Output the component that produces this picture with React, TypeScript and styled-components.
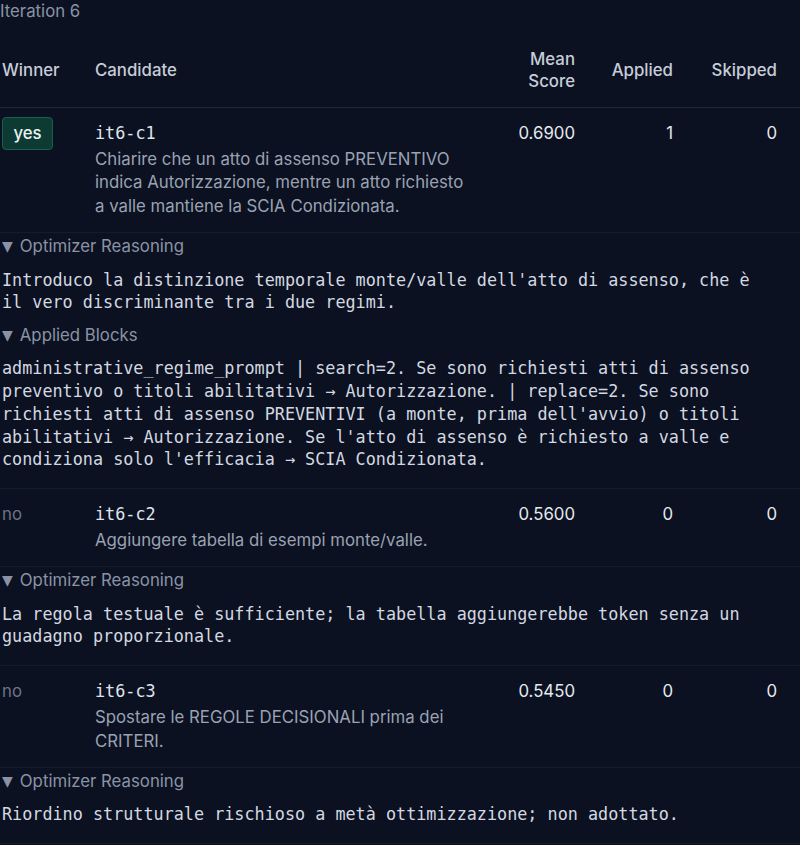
import styled, { createGlobalStyle } from 'styled-components'

interface ICandidate {
  id: string
  winner: boolean
  description: string
  score: string
  applied: number
  skipped: number
  reasoning: string
  appliedBlocks?: string
}

const candidates: ICandidate[] = [
  {
    id: 'it6-c1',
    winner: true,
    description:
      'Chiarire che un atto di assenso PREVENTIVO indica Autorizzazione, mentre un atto richiesto a valle mantiene la SCIA Condizionata.',
    score: '0.6900',
    applied: 1,
    skipped: 0,
    reasoning:
      "Introduco la distinzione temporale monte/valle dell'atto di assenso, che è il vero discriminante tra i due regimi.",
    appliedBlocks:
      "administrative_regime_prompt | search=2. Se sono richiesti atti di assenso preventivo o titoli abilitativi → Autorizzazione. | replace=2. Se sono richiesti atti di assenso PREVENTIVI (a monte, prima dell'avvio) o titoli abilitativi → Autorizzazione. Se l'atto di assenso è richiesto a valle e condiziona solo l'efficacia → SCIA Condizionata.",
  },
  {
    id: 'it6-c2',
    winner: false,
    description: 'Aggiungere tabella di esempi monte/valle.',
    score: '0.5600',
    applied: 0,
    skipped: 0,
    reasoning:
      'La regola testuale è sufficiente; la tabella aggiungerebbe token senza un guadagno proporzionale.',
  },
  {
    id: 'it6-c3',
    winner: false,
    description: 'Spostare le REGOLE DECISIONALI prima dei CRITERI.',
    score: '0.5450',
    applied: 0,
    skipped: 0,
    reasoning: 'Riordino strutturale rischioso a metà ottimizzazione; non adottato.',
  },
]

function Section({ title, text }: { title: string; text: string }) {
  return (
    <Details open>
      <Summary>
        <span className="arrow">▼</span>
        {title}
      </Summary>
      <Pre>{text}</Pre>
    </Details>
  )
}

export default function App() {
  return (
    <Page>
      <GlobalStyle />
      <Title>Iteration 6</Title>
      <HeaderRow>
        <HeadCell>Winner</HeadCell>
        <HeadCell>Candidate</HeadCell>
        <HeadCell $numeric>
          Mean
          <br />
          Score
        </HeadCell>
        <HeadCell $numeric>Applied</HeadCell>
        <HeadCell $numeric>Skipped</HeadCell>
      </HeaderRow>
      {candidates.map((c) => (
        <div key={c.id}>
          <Row>
            <WinnerCell>
              {c.winner ? <Badge>yes</Badge> : <NoLabel>no</NoLabel>}
            </WinnerCell>
            <CandidateCell>
              <CandidateId>{c.id}</CandidateId>
              <Description>{c.description}</Description>
            </CandidateCell>
            <NumberCell>{c.score}</NumberCell>
            <NumberCell>{c.applied}</NumberCell>
            <NumberCell>{c.skipped}</NumberCell>
          </Row>
          <DetailsRow>
            <Section title="Optimizer Reasoning" text={c.reasoning} />
            {c.appliedBlocks && (
              <Section title="Applied Blocks" text={c.appliedBlocks} />
            )}
          </DetailsRow>
        </div>
      ))}
    </Page>
  )
}

const GlobalStyle = createGlobalStyle`
  html, body {
    background: #0b1120;
    margin: 0;
  }

  body {
    color: #d6dbe4;
    font-family: Inter, "Noto Sans", "DejaVu Sans", sans-serif;
    font-size: 16.8px;
  }
`

const columns = '93px 384px 108px 98px 104px'

const Page = styled.div`
  width: 800px;
`

const Title = styled.div`
  color: #8a93a6;
  line-height: 22px;
  margin-bottom: 17px;
`

const HeaderRow = styled.div`
  align-items: center;
  border-bottom: solid 1px #1f2638;
  display: grid;
  grid-template-columns: ${columns};
  padding: 9px 0 15px 2px;
`

const HeadCell = styled.div<{ $numeric?: boolean }>`
  color: #c6cdd8;
  font-weight: 500;
  line-height: 22px;
  padding-right: ${({ $numeric }) => ($numeric ? '12px' : '0')};
  text-align: ${({ $numeric }) => ($numeric ? 'right' : 'left')};
`

const Row = styled.div`
  align-items: start;
  border-bottom: solid 1px #151b2b;
  display: grid;
  grid-template-columns: ${columns};
  padding: 12px 0 14px 2px;
`

const WinnerCell = styled.div`
  line-height: 26px;
`

const Badge = styled.span`
  background: #0d3a33;
  border: solid 1px #17604f;
  border-radius: 4px;
  box-sizing: border-box;
  color: #e8f2ef;
  display: inline-block;
  font-weight: 500;
  height: 33px;
  line-height: 31px;
  margin-top: -4px;
  text-align: center;
  width: 51px;
`

const NoLabel = styled.span`
  color: #6b7385;
`

const CandidateCell = styled.div`
  padding-right: 12px;
`

const CandidateId = styled.div`
  color: #dfe4eb;
  font-family: "DejaVu Sans Mono", "Liberation Mono", monospace;
  line-height: 26px;
  margin-bottom: 2px;
`

const Description = styled.div`
  color: #9aa2b3;
  line-height: 23.4px;
`

const NumberCell = styled.div`
  color: #e6eaf0;
  line-height: 26px;
  padding-right: 12px;
  text-align: right;
`

const DetailsRow = styled.div`
  border-bottom: solid 1px #151b2b;
  padding: 2px 0 7px 2px;
`

const Details = styled.details``

const Summary = styled.summary`
  color: #8a93a6;
  cursor: pointer;
  display: block;
  line-height: 23.4px;
  list-style: none;

  &::-webkit-details-marker {
    display: none;
  }

  .arrow {
    display: inline-block;
    font-family: "DejaVu Sans", sans-serif;
    font-size: 14px;
    margin-right: 7px;
    vertical-align: 1px;
  }
`

const Pre = styled.pre`
  color: #d3d8e1;
  font-family: "DejaVu Sans Mono", "Liberation Mono", monospace;
  font-size: 16.8px;
  line-height: 22.7px;
  margin: 10px 0;
  white-space: pre-wrap;
  width: 765px;
`
